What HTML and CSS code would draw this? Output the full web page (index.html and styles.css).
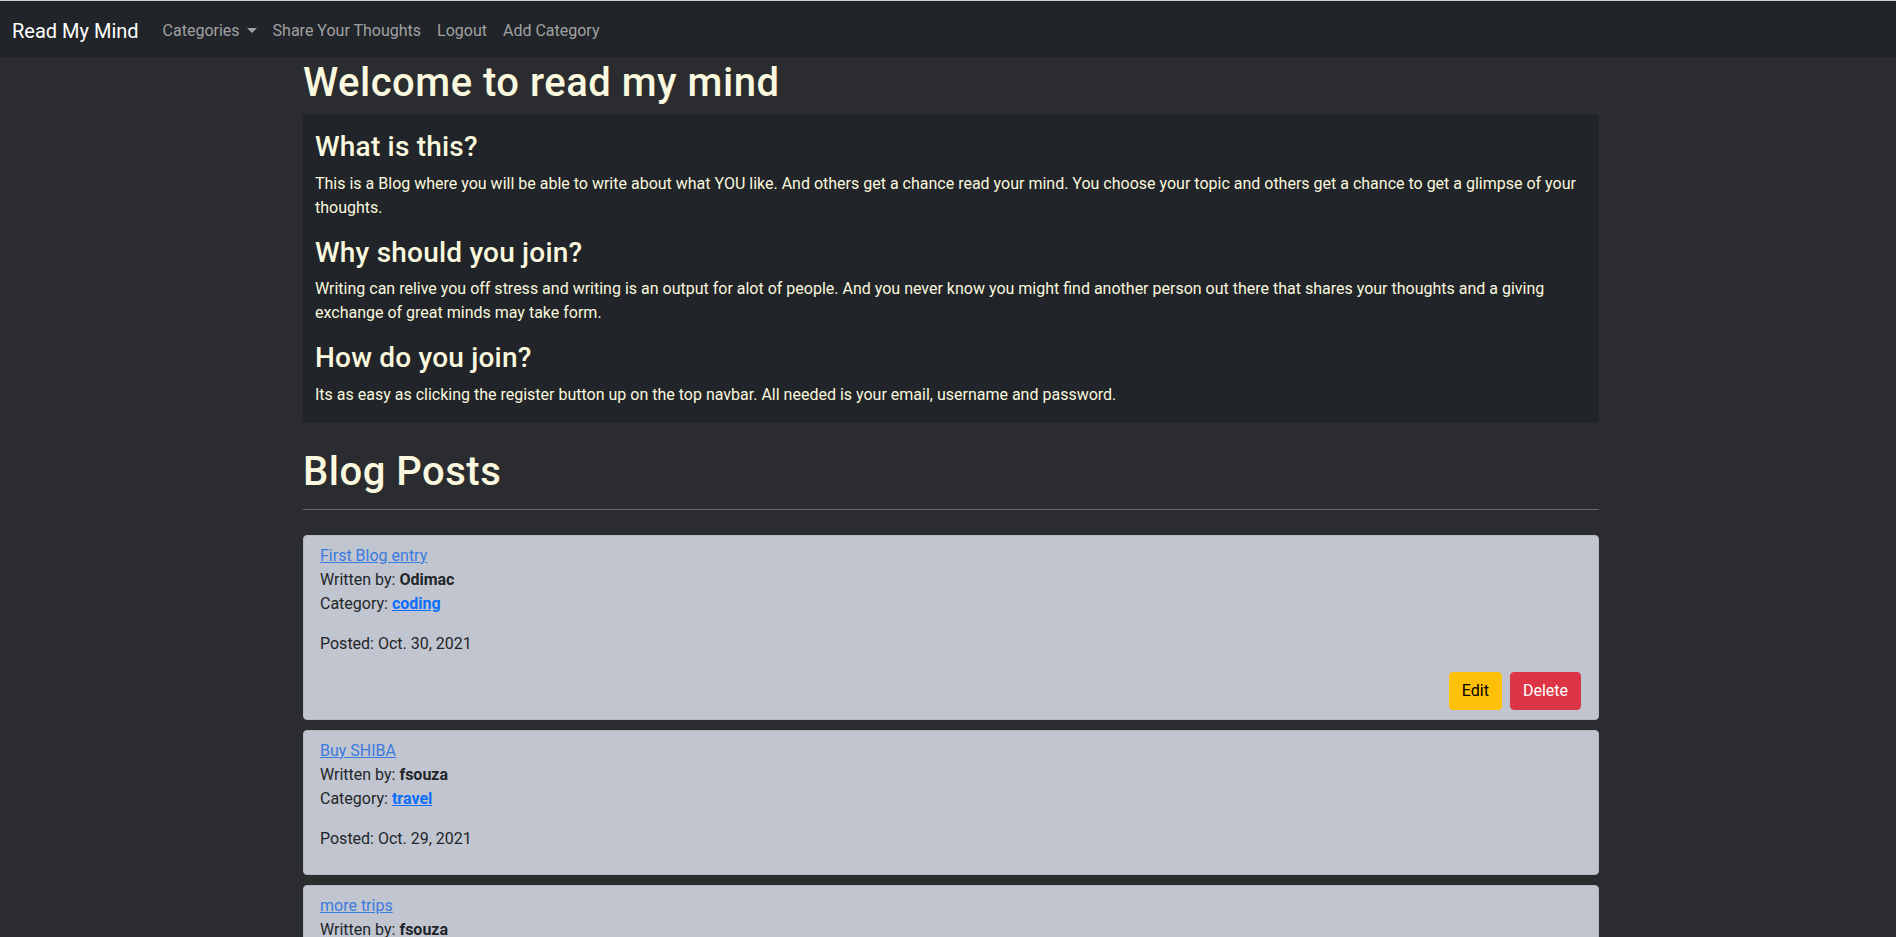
FILE: index.html
```html
<!DOCTYPE html>
<html lang="en">
<head>
<meta charset="utf-8">
<title>Read My Mind</title>
<link rel="stylesheet" href="styles.css">
</head>
<body>
<nav class="navbar">
  <a class="brand" href="#">Read My Mind</a>
  <ul class="nav">
    <li><a class="nav-link dropdown" href="#">Categories<span class="caret"></span></a></li>
    <li><a class="nav-link" href="#">Share Your Thoughts</a></li>
    <li><a class="nav-link" href="#">Logout</a></li>
    <li><a class="nav-link" href="#">Add Category</a></li>
  </ul>
</nav>
<main class="container">
  <h1 class="title">Welcome to read my mind</h1>
  <section class="about">
    <h3>What is this?</h3>
    <p>This is a Blog where you will be able to write about what YOU like. And others get a chance read your mind. You choose your topic and others get a chance to get a glimpse of your thoughts.</p>
    <h3>Why should you join?</h3>
    <p>Writing can relive you off stress and writing is an output for alot of people. And you never know you might find another person out there that shares your thoughts and a giving exchange of great minds may take form.</p>
    <h3>How do you join?</h3>
    <p>Its as easy as clicking the register button up on the top navbar. All needed is your email, username and password.</p>
  </section>
  <h1 class="section-title">Blog Posts</h1>
  <hr class="rule">
  <ul class="posts">
    <li class="post">
      <p class="meta"><a class="post-link" href="#">First Blog entry</a><br>Written by: <strong>Odimac</strong><br>Category: <a class="cat-link" href="#">coding</a></p>
      <p class="posted">Posted: Oct. 30, 2021</p>
      <div class="actions">
        <a class="btn btn-edit" href="#">Edit</a>
        <a class="btn btn-delete" href="#">Delete</a>
      </div>
    </li>
    <li class="post">
      <p class="meta"><a class="post-link" href="#">Buy SHIBA</a><br>Written by: <strong>fsouza</strong><br>Category: <a class="cat-link" href="#">travel</a></p>
      <p class="posted">Posted: Oct. 29, 2021</p>
    </li>
    <li class="post">
      <p class="meta"><a class="post-link" href="#">more trips</a><br>Written by: <strong>fsouza</strong><br>Category: <a class="cat-link" href="#">travel</a></p>
      <p class="posted">Posted: Oct. 29, 2021</p>
    </li>
  </ul>
</main>
</body>
</html>
```
FILE: styles.css
```css
* { box-sizing: border-box; }
html, body { margin: 0; padding: 0; }
body {
  background: #2b2c2f;
  font-family: Roboto, "Liberation Sans", sans-serif;
  font-size: 16px;
  line-height: 1.5;
  color: #212529;
  border-top: 1px solid #cfd0d2;
}
.navbar {
  display: flex;
  align-items: center;
  height: 56px;
  padding: 3px 12px 0;
  background: #212428;
}
.brand {
  color: #fff;
  font-size: 20px;
  text-decoration: none;
  margin-right: 16px;
  line-height: 30px;
}
.nav {
  display: flex;
  list-style: none;
  margin: 0;
  padding: 0;
}
.nav-link {
  display: flex;
  align-items: center;
  padding: 8px;
  color: rgba(255, 255, 255, 0.58);
  text-decoration: none;
}
.caret {
  display: inline-block;
  margin-left: 7px;
  border-top: 5px solid rgba(255, 255, 255, 0.58);
  border-left: 5px solid transparent;
  border-right: 5px solid transparent;
}
.container {
  max-width: 1320px;
  margin: 0 auto;
  padding: 0 9px 0 15px;
}
h1, h3 {
  font-weight: 500;
  line-height: 1.2;
  color: #faf8df;
  margin: 0 0 8px;
}
h1 { font-size: 40px; letter-spacing: 0.5px; }
h3 { font-size: 28px; letter-spacing: 0.2px; }
.title { margin-top: 2px; }
.about {
  display: flow-root;
  background: #212428;
  padding: 15px 12px 0;
  color: #faf8df;
}
.about p { margin: 0 0 16px; }
.section-title { margin-top: 25px; }
.rule {
  border: 0;
  border-top: 1px solid #6a6a66;
  margin: 13px 0 25px;
  height: 0;
}
.posts {
  display: flex;
  flex-direction: column;
  gap: 10px;
  list-style: none;
  margin: 0;
  padding: 0;
}
.post {
  background: #c1c5cf;
  border: 1px solid #b5b9c2;
  border-radius: 4px;
  padding: 8px 16px 7px;
}
.post p { margin: 0 0 16px; }
.post-link { color: #3a7be0; }
.cat-link { color: #0d6efd; font-weight: 700; }
strong { font-weight: 700; }
.actions {
  display: flex;
  justify-content: flex-end;
  gap: 8px;
  margin: 1px 1px 2px 0;
}
.btn {
  display: inline-block;
  padding: 6px 12px;
  border: 1px solid transparent;
  border-radius: 4px;
  text-decoration: none;
  line-height: 24px;
}
.btn-edit { background: #ffc107; border-color: #ffc107; color: #000; }
.btn-delete { background: #dc3545; border-color: #dc3545; color: #fff; }
```
